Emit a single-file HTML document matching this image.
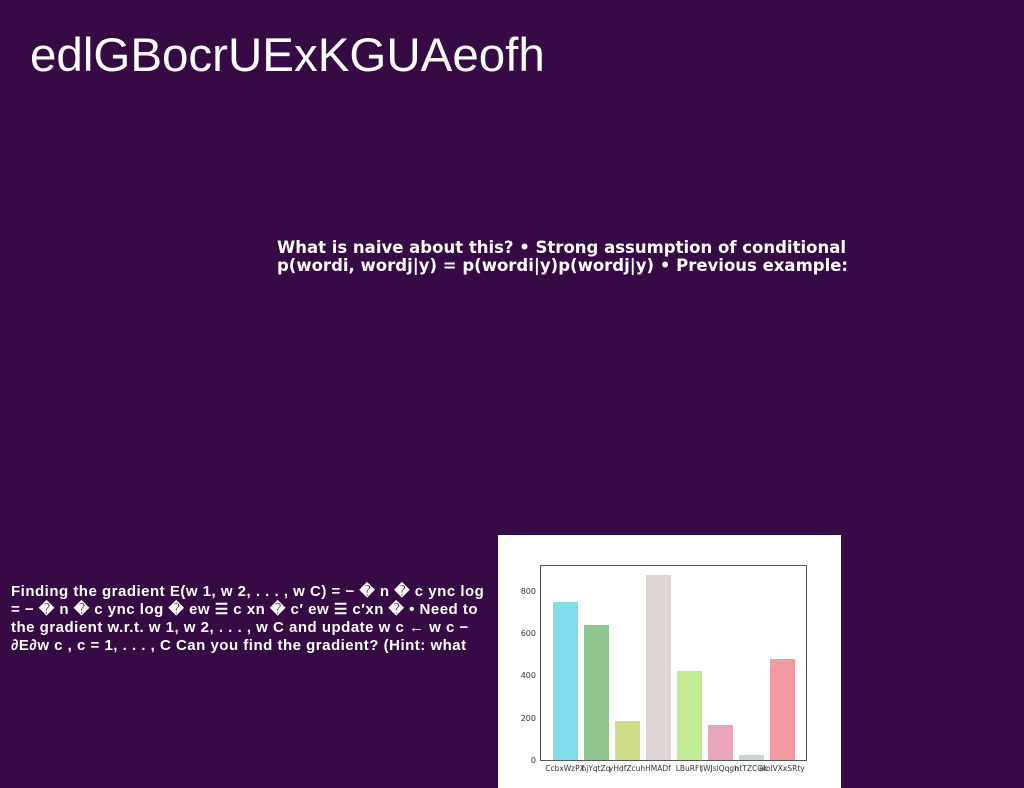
<!DOCTYPE html>
<html><head><meta charset="utf-8"><style>
html,body{margin:0;width:1024px;height:788px;overflow:hidden}
body{background:#360b45;position:relative;font-family:"Liberation Sans",sans-serif;color:#fff}
.t{position:absolute;left:30px;top:28px;font-size:47.5px}
.a{position:absolute;left:277px;top:239px;font-size:16.5px;font-weight:bold;line-height:18px;font-family:"DejaVu Sans",sans-serif;white-space:nowrap}
.b{position:absolute;left:11px;top:583px;font-size:15px;font-weight:bold;line-height:18px;font-family:"Liberation Sans",sans-serif;white-space:nowrap;letter-spacing:0.5px}
.c{position:absolute;left:498px;top:535px;width:343px;height:253px;background:#fff}
</style></head><body>
<div class="t">edlGBocrUExKGUAeofh</div>
<div class="a">What is naive about this? • Strong assumption of conditional<br>p(wordi, wordj|y) = p(wordi|y)p(wordj|y) • Previous example:</div>
<div class="b">Finding the gradient E(w 1, w 2, . . . , w C) = − � n � c ync log<br>= − � n � c ync log � ew ☰ c xn � c′ ew ☰ c′xn � • Need to<br>the gradient w.r.t. w 1, w 2, . . . , w C and update w c ← w c −<br>∂E∂w c , c = 1, . . . , C Can you find the gradient? (Hint: what</div>
<div class="c"><svg width="343" height="253" font-family="DejaVu Sans,sans-serif" font-size="8" fill="#333">
<rect x="55" y="67" width="25" height="158" fill="#80deea"/>
<rect x="86" y="90" width="25" height="135" fill="#8fc690"/>
<rect x="117" y="186" width="25" height="39" fill="#cede88"/>
<rect x="148" y="40" width="25" height="185" fill="#e0d5d5"/>
<rect x="179" y="136" width="25" height="89" fill="#c0ec94"/>
<rect x="210" y="190" width="25" height="35" fill="#e8a6bc"/>
<rect x="241" y="220" width="25" height="5" fill="#c8d8cc"/>
<rect x="272" y="124" width="25" height="101" fill="#f19aa0"/>
<rect x="42.5" y="30.5" width="266" height="195" fill="none" stroke="#555"/>
<g text-anchor="end"><text x="38" y="228">0</text><text x="38" y="186">200</text><text x="38" y="143">400</text><text x="38" y="101">600</text><text x="38" y="59">800</text></g>
<g font-size="7.5" text-anchor="middle"><text x="67" y="236">CcbxWzPX</text><text x="98" y="236">hjYqtZq</text><text x="129" y="236">yHdfZcuh</text><text x="160" y="236">HMADf</text><text x="191" y="236">LBuRFt</text><text x="222" y="236">jWJslQqgh</text><text x="253" y="236">ntTZCGk</text><text x="284" y="236">ololVXxSRty</text></g>
</svg></div>
</body></html>
